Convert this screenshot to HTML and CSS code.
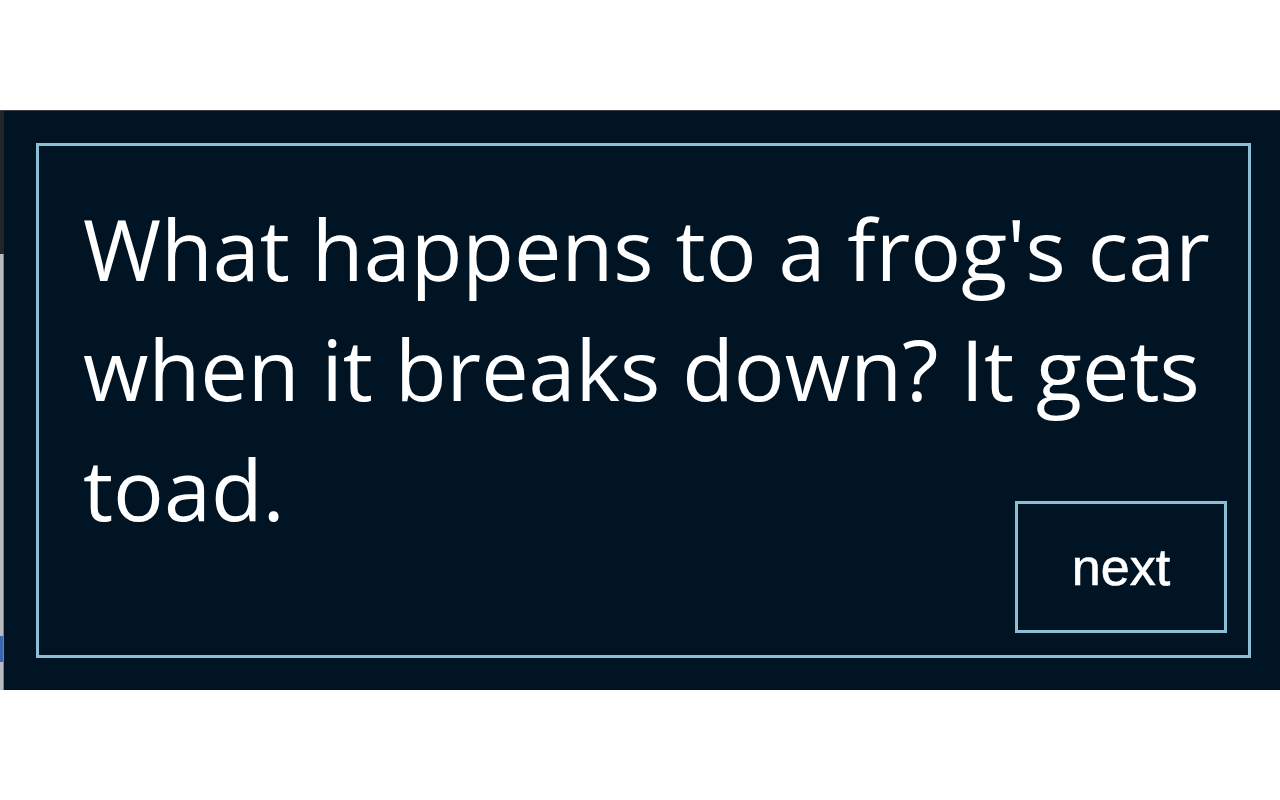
FILE: index.html
```html
<!DOCTYPE html>
<html lang="en">
<head>
<meta charset="utf-8">
<title>Joke</title>
<link rel="stylesheet" href="styles.css">
</head>
<body>
<div class="top-space"></div>
<div class="panel">
  <div class="edge">
    <div class="edge-dark"></div>
    <div class="edge-light"><div class="edge-mark"></div></div>
  </div>
  <div class="card">
    <p class="joke">What happens to a frog's car when it breaks down? It gets toad.</p>
    <button class="next">next</button>
  </div>
</div>
</body>
</html>
```

FILE: styles.css
```css
html, body {
  margin: 0;
  padding: 0;
  background: #ffffff;
}
.top-space {
  height: 110px;
}
.panel {
  height: 580px;
  background: #011423;
  border-top: 1px solid #3b4249;
  display: flex;
  box-sizing: border-box;
  padding: 32px 29px 32px 0;
}
.edge {
  width: 4px;
  margin: -32px 32px -32px 0;
  display: flex;
  flex-direction: column;
}
.edge-dark {
  height: 143px;
  background: #22262c;
}
.edge-light {
  flex: 1;
  background: #b8bbbe;
  border-right: 1px solid #7d8186;
  display: flex;
  flex-direction: column;
  justify-content: flex-end;
  padding-bottom: 28px;
}
.edge-mark {
  height: 26px;
  background: #3a66b4;
}
.card {
  flex: 1;
  border: 3px solid #8cbfd4;
  display: grid;
  padding: 0 21px 22px 44px;
}
.joke {
  grid-area: 1 / 1;
  align-self: start;
  box-sizing: border-box;
  height: 352px;
  margin: 0;
  padding-top: 43px;
  font-family: "Open Sans", "Noto Sans", sans-serif;
  font-size: 84.5px;
  line-height: 120px;
  color: #ffffff;
}
.next {
  grid-area: 1 / 1;
  justify-self: end;
  align-self: end;
  width: 212px;
  height: 132px;
  background: #011423;
  border: 3px solid #8cbfd4;
  color: #ffffff;
  font-family: "Liberation Sans", Arial, sans-serif;
  font-size: 52px;
  padding: 0;
  -webkit-text-stroke: 0.6px #ffffff;
}
```
